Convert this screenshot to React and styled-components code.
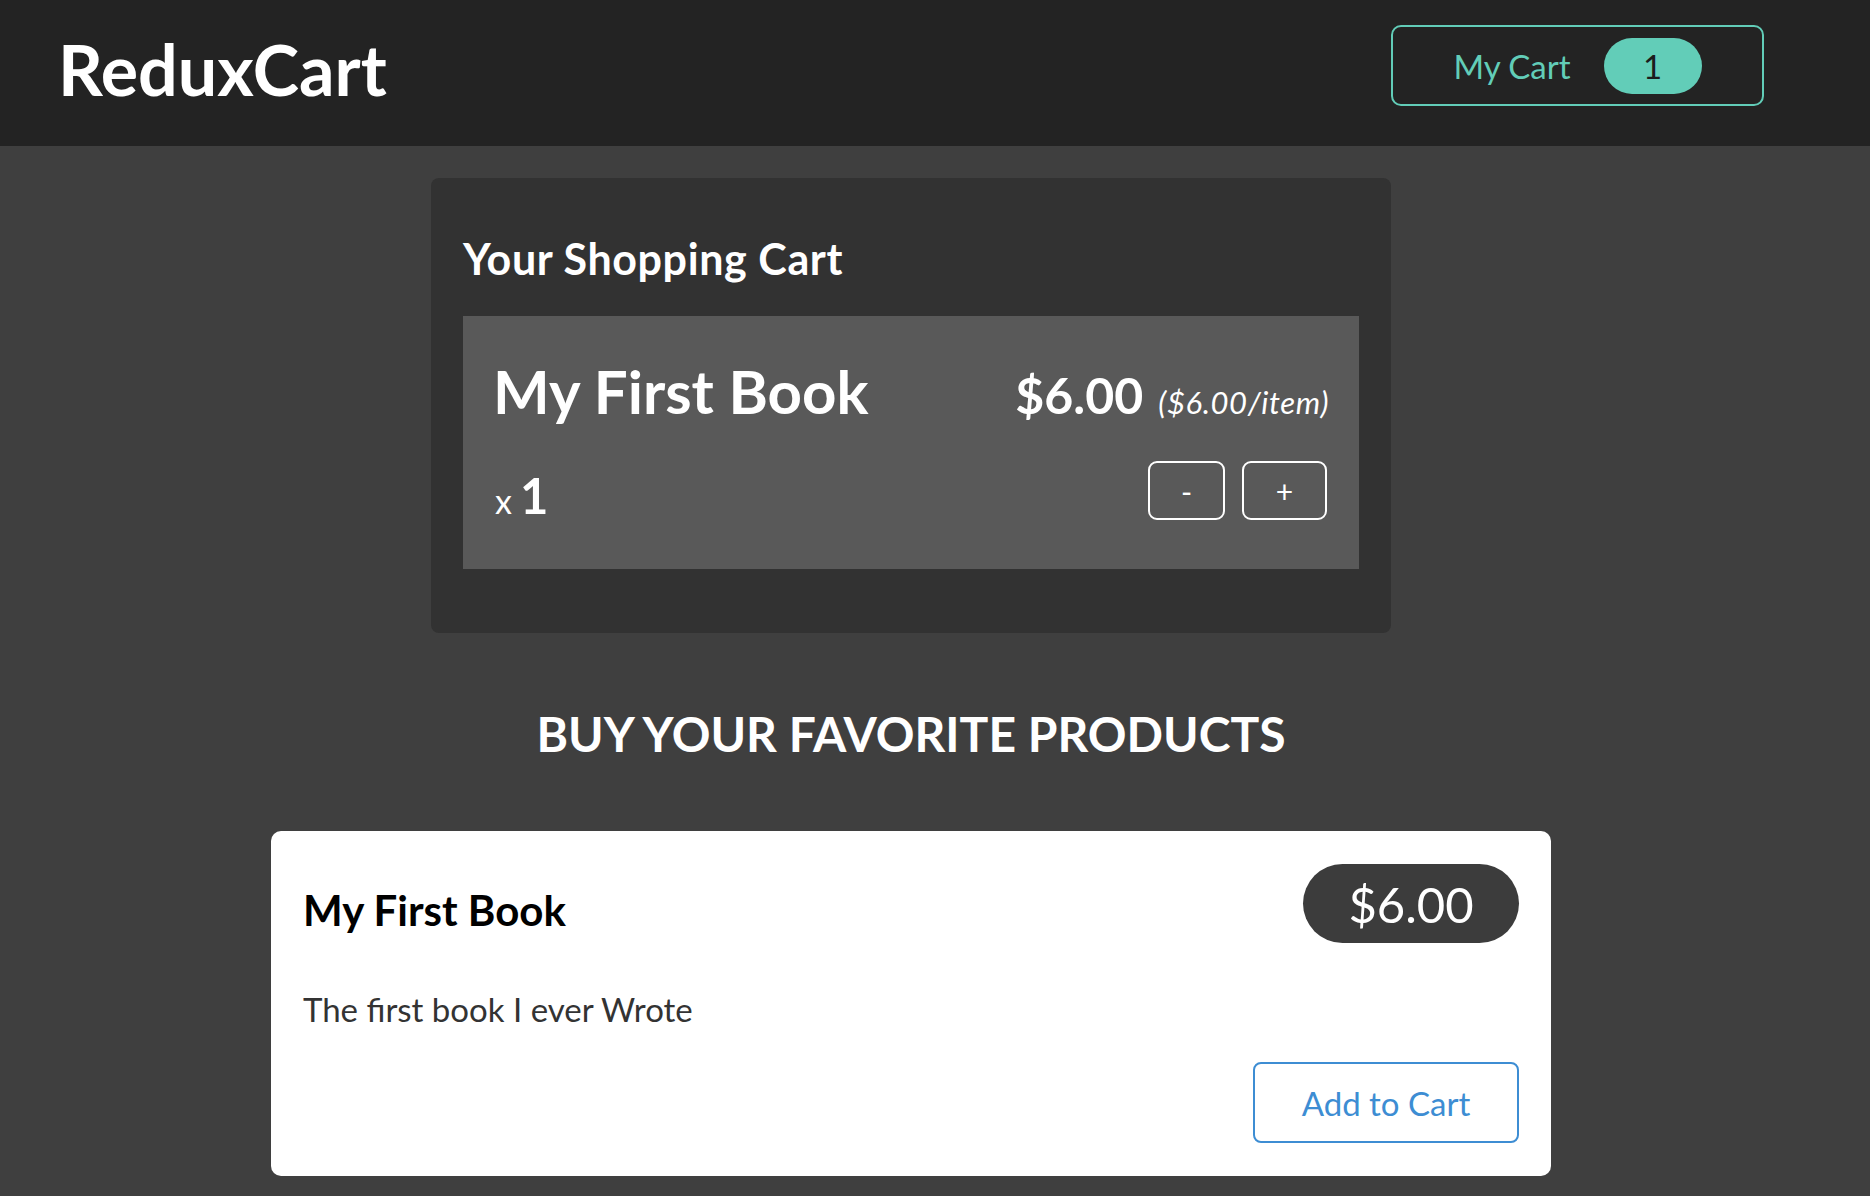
import React from 'react'
import styled, { createGlobalStyle } from 'styled-components';

const GlobalStyle = createGlobalStyle`
    body{
        margin:0;
        background-color:#3f3f3f;
        font-family:Lato, "Open Sans", sans-serif;
    }
    *{ box-sizing:border-box; }
`

const App = () => {
    return (
        <>
            <GlobalStyle />
            <Header>
                <Logo>ReduxCart</Logo>
                <CartButton>
                    <span>My Cart</span>
                    <Badge>1</Badge>
                </CartButton>
            </Header>
            <Main>
                <CartPanel>
                    <PanelTitle>Your Shopping Cart</PanelTitle>
                    <CartItem>
                        <ItemTop>
                            <ItemName>My First Book</ItemName>
                            <ItemPrice>
                                $6.00 <PerItem>($6.00/item)</PerItem>
                            </ItemPrice>
                        </ItemTop>
                        <ItemBottom>
                            <Quantity>
                                <Times>x</Times>1
                            </Quantity>
                            <Actions>
                                <QtyButton wide={false}>-</QtyButton>
                                <QtyButton wide>+</QtyButton>
                            </Actions>
                        </ItemBottom>
                    </CartItem>
                </CartPanel>

                <SectionTitle>BUY YOUR FAVORITE PRODUCTS</SectionTitle>

                <ProductCard>
                    <CardHead>
                        <ProductName>My First Book</ProductName>
                        <PriceTag>$6.00</PriceTag>
                    </CardHead>
                    <Description>The first book I ever Wrote</Description>
                    <CardActions>
                        <AddButton>Add to Cart</AddButton>
                    </CardActions>
                </ProductCard>
            </Main>
        </>
    )
}

const Header = styled.header`
    height:146px;
    background-color:#232323;
    display:flex;
    justify-content:space-between;
    align-items:flex-start;
    padding:0 106px 0 58px;
`
const Logo = styled.h1`
    margin:34px 0 0;
    font-size:70px;
    line-height:1;
    font-weight:700;
    color:#fff;
`
const CartButton = styled.button`
    margin-top:25px;
    width:373px; height:81px;
    display:flex; align-items:center; justify-content:center;
    gap:33px;
    background:transparent;
    border:2px solid #62cdb8;
    border-radius:10px;
    color:#62cdb8;
    font-family:inherit;
    font-size:33px;
    cursor:pointer;
`
const Badge = styled.span`
    width:98px; height:56px;
    border-radius:28px;
    background-color:#62cdb8;
    color:#1c1c1c;
    display:flex; align-items:center; justify-content:center;
    font-size:33px;
`
const Main = styled.main`
    display:flex;
    flex-direction:column;
    align-items:center;
    padding:32px 48px 0 0;
`
const CartPanel = styled.section`
    width:960px;
    background-color:#323232;
    border-radius:8px;
    padding:59px 32px 64px;
`
const PanelTitle = styled.h2`
    margin:0 0 36px;
    font-size:43px;
    line-height:1;
    color:#fff;
    font-weight:700;
    letter-spacing:0.6px;
`
const CartItem = styled.div`
    height:253px;
    background-color:#595959;
    padding:45px 30px 49px;
    display:flex; flex-direction:column; justify-content:space-between;
    color:#fff;
`
const ItemTop = styled.div`
    display:flex;
    justify-content:space-between;
    align-items:baseline;
`
const ItemName = styled.h3`
    margin:0;
    font-size:60px;
    line-height:1;
    font-weight:700;
`
const ItemPrice = styled.div`
    font-size:50px;
    line-height:1;
    font-weight:700;
`
const PerItem = styled.span`
    font-size:31px;
    font-weight:400;
    font-style:italic;
    letter-spacing:0.6px;
    margin-left:3px;
`
const ItemBottom = styled.div`
    display:flex;
    justify-content:space-between;
    align-items:flex-end;
`
const Quantity = styled.div`
    font-size:49px;
    line-height:1;
    font-weight:700;
    padding-left:2px;
`
const Times = styled.span`
    font-size:34px;
    font-weight:400;
    margin-right:8px;
`
const Actions = styled.div`
    display:flex;
    gap:17px;
    margin-right:2px;
`
const QtyButton = styled.button`
    width:${p => (p.wide ? '85px' : '77px')};
    height:59px;
    background:transparent;
    border:2px solid #fff;
    border-radius:9px;
    color:#fff;
    font-family:inherit;
    font-size:30px;
    cursor:pointer;
`
const SectionTitle = styled.h2`
    margin:77px 0 73px;
    font-size:48px;
    line-height:1;
    font-weight:700;
    color:#fff;
`
const ProductCard = styled.article`
    width:1280px;
    background-color:#fff;
    border-radius:10px;
    padding:33px 32px;
`
const CardHead = styled.div`
    display:flex;
    justify-content:space-between;
    align-items:flex-start;
`
const ProductName = styled.h3`
    margin:25px 0 0;
    font-size:42px;
    line-height:1;
    font-weight:700;
    color:#000;
`
const PriceTag = styled.div`
    width:216px; height:79px;
    border-radius:40px;
    background-color:#3c3c3c;
    color:#fff;
    font-size:49px;
    display:flex; align-items:center; justify-content:center;
`
const Description = styled.p`
    margin:50px 0 36px;
    font-size:33px;
    line-height:1;
    color:#333;
`
const CardActions = styled.div`
    display:flex;
    justify-content:flex-end;
`
const AddButton = styled.button`
    width:266px; height:81px;
    background:#fff;
    border:2px solid #3d8dd3;
    border-radius:8px;
    color:#3d8dd3;
    font-family:inherit;
    font-size:33px;
    cursor:pointer;
`

export default App;
